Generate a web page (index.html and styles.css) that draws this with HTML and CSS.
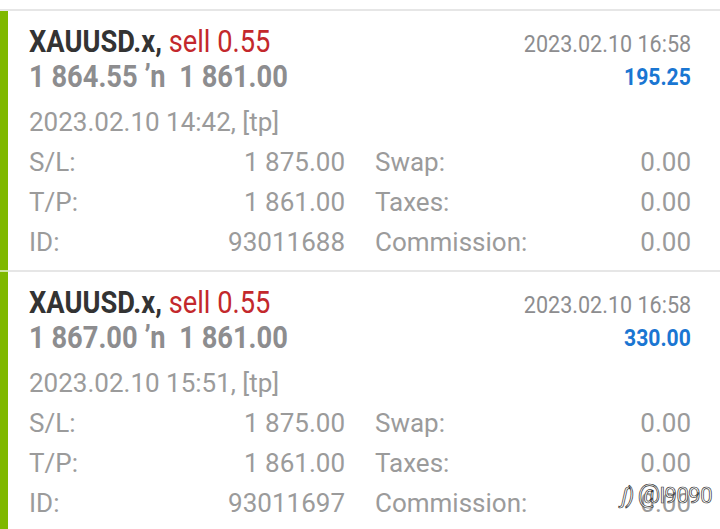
FILE: index.html
```html
<!DOCTYPE html>
<html>
<head>
<meta charset="utf-8">
<link rel="stylesheet" href="styles.css">
</head>
<body>
<div class="list">
  <div class="card first">
    <div class="bar"></div>
    <div class="content">
      <div class="head">
        <div class="head-left">
          <div class="title"><span class="cond"><span class="sym">XAUUSD.x,</span> <span class="sell">sell 0.55</span></span></div>
          <div class="prices"><span class="cond">1 864.55 ʼn&nbsp; 1 861.00</span></div>
        </div>
        <div class="head-right">
          <div class="time"><span class="cond r">2023.02.10 16:58</span></div>
          <div class="profit"><span class="cond r">195.25</span></div>
        </div>
      </div>
      <div class="open">2023.02.10 14:42, [tp]</div>
      <div class="grid">
        <div class="cell"><span>S/L:</span><span>1 875.00</span></div>
        <div class="cell"><span>Swap:</span><span>0.00</span></div>
        <div class="cell"><span>T/P:</span><span>1 861.00</span></div>
        <div class="cell"><span>Taxes:</span><span>0.00</span></div>
        <div class="cell"><span>ID:</span><span>93011688</span></div>
        <div class="cell"><span>Commission:</span><span>0.00</span></div>
      </div>
    </div>
  </div>
  <div class="card second">
    <div class="bar"></div>
    <div class="content">
      <div class="head">
        <div class="head-left">
          <div class="title"><span class="cond"><span class="sym">XAUUSD.x,</span> <span class="sell">sell 0.55</span></span></div>
          <div class="prices"><span class="cond">1 867.00 ʼn&nbsp; 1 861.00</span></div>
        </div>
        <div class="head-right">
          <div class="time"><span class="cond r">2023.02.10 16:58</span></div>
          <div class="profit"><span class="cond r">330.00</span></div>
        </div>
      </div>
      <div class="open">2023.02.10 15:51, [tp]</div>
      <div class="grid">
        <div class="cell"><span>S/L:</span><span>1 875.00</span></div>
        <div class="cell"><span>Swap:</span><span>0.00</span></div>
        <div class="cell"><span>T/P:</span><span>1 861.00</span></div>
        <div class="cell"><span>Taxes:</span><span>0.00</span></div>
        <div class="cell"><span>ID:</span><span>93011697</span></div>
        <div class="cell"><span>Commission:</span><span>0.00</span></div>
      </div>
    </div>
  </div>
</div>
<div class="watermark"><span class="wm-logo">ʃ)</span><span class="wm-at">@</span>l9090</div>
</body>
</html>
```

FILE: styles.css
```css
html, body {
  margin: 0;
  padding: 0;
  background: #ffffff;
}
body {
  font-family: Roboto, "Noto Sans", sans-serif;
  width: 720px;
  height: 529px;
  overflow: hidden;
  position: relative;
}
.list {
  padding-top: 9px;
}
.card {
  display: grid;
  grid-template-columns: 8px 1fr;
  height: 261px;
}
.bar {
  background: #7fb800;
  border-top: 2px solid #e6e6e6;
}
.second .bar {
  border-top-color: #cfe5a3;
}
.content {
  border-top: 2px solid #e6e6e6;
  padding: 13px 29px 0 21px;
}
.head {
  display: flex;
  justify-content: space-between;
}
.cond {
  display: inline-block;
  transform: scaleX(0.88);
  transform-origin: left center;
  white-space: nowrap;
}
.cond.r {
  transform-origin: right center;
}
.title {
  font-size: 31px;
  line-height: 35px;
  font-weight: 700;
  color: #333333;
}
.title .sell {
  color: #c3282c;
  font-weight: 400;
}
.prices {
  font-size: 31px;
  line-height: 35px;
  font-weight: 700;
  color: #8d8d8f;
}
.head-right {
  text-align: right;
}
.time {
  font-size: 24.5px;
  line-height: 35px;
  color: #8d8d8f;
  padding-top: 2px;
}
.profit {
  font-size: 24px;
  line-height: 33px;
  font-weight: 700;
  color: #1a76d2;
}
.open {
  margin-top: 8px;
  font-size: 26px;
  line-height: 40px;
  color: #9b9b9b;
}
.grid {
  display: grid;
  grid-template-columns: 1fr 1fr;
  column-gap: 30px;
}
.cell {
  display: flex;
  justify-content: space-between;
  font-size: 26px;
  line-height: 40px;
  color: #9b9b9b;
}
.watermark {
  position: absolute;
  right: 8px;
  bottom: 20px;
  font-size: 22px;
  color: #ffffff;
  -webkit-text-stroke: 0.7px #333333;
  letter-spacing: -0.5px;
}
.wm-logo {
  font-style: italic;
  margin-right: 4px;
}
.wm-at {
  font-size: 25px;
}
```
